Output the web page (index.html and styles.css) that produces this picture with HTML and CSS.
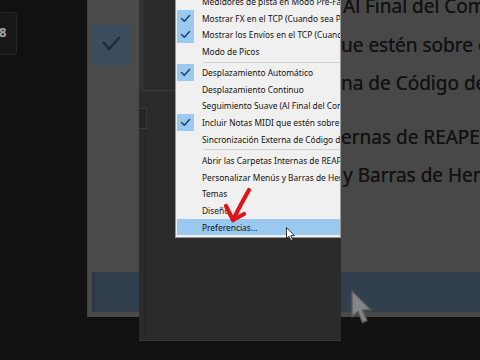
FILE: index.html
```html
<!DOCTYPE html>
<html lang="es">
<head>
<meta charset="utf-8">
<title>Menú Opciones</title>
<link rel="stylesheet" href="styles.css">
</head>
<body>
<div class="frame">
  <div class="col col-a">
    <div class="tl-box"><span class="tl-glyph">8</span></div>
  </div>
  <div class="col col-b">
    <div class="panel-b">
      <div class="chk-big">
        <svg width="38" height="40" viewBox="0 0 38 40"><polyline points="12,18 17,24 27,13" fill="none" stroke="#1c2a3a" stroke-width="2.4" stroke-linecap="round" stroke-linejoin="round"/></svg>
      </div>
      <div class="band band-b"></div>
    </div>
  </div>
  <div class="col col-c">
    <div class="panel-c">
      <div class="side-strip">
        <div class="strip-top"></div>
        <div class="strip-box"></div>
        <div class="strip-line"></div>
      </div>
      <div class="menu">
        <div class="menu-list">
          <div class="item"><span class="chk"></span><span class="label">Medidores de pista en Modo Pre-Fader</span></div>
          <div class="item"><span class="chk on"><svg width="17" height="17" viewBox="0 0 17 17"><polyline points="4.5,8.5 7.3,11.3 12.5,5.6" fill="none" stroke="#1f3d6b" stroke-width="1.5" stroke-linecap="round" stroke-linejoin="round"/></svg></span><span class="label">Mostrar FX en el TCP (Cuando sea Posible)</span></div>
          <div class="item"><span class="chk on"><svg width="17" height="17" viewBox="0 0 17 17"><polyline points="4.5,8.5 7.3,11.3 12.5,5.6" fill="none" stroke="#1f3d6b" stroke-width="1.5" stroke-linecap="round" stroke-linejoin="round"/></svg></span><span class="label">Mostrar los Envíos en el TCP (Cuando sea Posible)</span></div>
          <div class="item"><span class="chk"></span><span class="label">Modo de Picos</span></div>
          <div class="sep"></div>
          <div class="item"><span class="chk on"><svg width="17" height="17" viewBox="0 0 17 17"><polyline points="4.5,8.5 7.3,11.3 12.5,5.6" fill="none" stroke="#1f3d6b" stroke-width="1.5" stroke-linecap="round" stroke-linejoin="round"/></svg></span><span class="label">Desplazamiento Automático</span></div>
          <div class="item"><span class="chk"></span><span class="label">Desplazamiento Continuo</span></div>
          <div class="item"><span class="chk"></span><span class="label">Seguimiento Suave (Al Final del Compás)</span></div>
          <div class="item"><span class="chk on"><svg width="17" height="17" viewBox="0 0 17 17"><polyline points="4.5,8.5 7.3,11.3 12.5,5.6" fill="none" stroke="#1f3d6b" stroke-width="1.5" stroke-linecap="round" stroke-linejoin="round"/></svg></span><span class="label">Incluir Notas MIDI que estén sobre el Cursor</span></div>
          <div class="item"><span class="chk"></span><span class="label">Sincronización Externa de Código de Tiempo</span></div>
          <div class="sep"></div>
          <div class="item"><span class="chk"></span><span class="label">Abrir las Carpetas Internas de REAPER</span></div>
          <div class="item"><span class="chk"></span><span class="label">Personalizar Menús y Barras de Herramientas</span></div>
          <div class="item"><span class="chk"></span><span class="label">Temas</span></div>
          <div class="item"><span class="chk"></span><span class="label">Diseño</span></div>
          <div class="item hl"><span class="chk"></span><span class="label">Preferencias...</span></div>
        </div>
      </div>
    </div>
  </div>
  <div class="col col-d">
    <div class="panel-d">
      <div class="zoomtext">
        <div class="zl">Al Final del Compás</div>
        <div class="zl zl-flush">ue estén sobre el</div>
        <div class="zl zl-flush">na de Código de</div>
        <div class="zl zl-flush zl-gap">ernas de REAPER</div>
        <div class="zl">y Barras de Herr</div>
      </div>
      <div class="band band-d"></div>
    </div>
  </div>

  <svg class="red-arrow" width="40" height="44" viewBox="0 0 40 44">
    <path d="M30 4 Q23 16 14 34" fill="none" stroke="#e0141b" stroke-width="4.2" stroke-linecap="round"/>
    <path d="M7 20 L14 34 L25 28" fill="none" stroke="#e0141b" stroke-width="4.2" stroke-linecap="round" stroke-linejoin="round"/>
  </svg>
  <svg class="cursor-small" width="10" height="15" viewBox="0 0 10 15">
    <path d="M0.5 0.5 L0.5 11.5 L3 9.2 L4.8 13.6 L6.6 12.8 L4.8 8.6 L8.3 8.6 Z" fill="#ffffff" stroke="#202020" stroke-width="0.9" stroke-linejoin="round"/>
  </svg>
  <svg class="cursor-big" width="24" height="36" viewBox="0 0 24 36">
    <path d="M1 1 L1 27 L7 21.5 L11.5 32.5 L16 30.5 L11.5 20 L20 20 Z" fill="#858585" stroke="#5a5a5a" stroke-width="1.4" stroke-linejoin="round"/>
  </svg>
</div>
</body>
</html>
```

FILE: styles.css
```css
html, body {
  margin: 0;
  padding: 0;
  background: #111111;
}

.frame {
  position: relative;
  width: 480px;
  height: 360px;
  overflow: hidden;
  display: flex;
  background: #111111;
  font-family: "Noto Sans", "Open Sans", sans-serif;
}

.col {
  height: 360px;
  flex: none;
}

/* left black column */
.col-a {
  width: 87px;
  background: #111111;
}

.tl-box {
  margin-top: 12px;
  width: 17px;
  height: 43px;
  box-sizing: border-box;
  background: #181818;
  border: 1px solid #272727;
  border-left: none;
  border-radius: 0 4px 4px 0;
  overflow: hidden;
  display: flex;
  align-items: center;
}

.tl-glyph {
  margin-left: -1px;
  margin-top: -4px;
  font-size: 13px;
  font-weight: bold;
  color: #a8a8a8;
}

/* gray column */
.col-b {
  width: 52px;
}

.panel-b {
  height: 317px;
  background: #4a4a4a;
  border-left: 1px solid #414141;
  box-sizing: border-box;
  display: flex;
  flex-direction: column;
}

.chk-big {
  margin-top: 25px;
  margin-left: 4px;
  width: 38px;
  height: 40px;
  background: #3a4c5e;
}

.chk-big svg {
  display: block;
}

.band {
  height: 40px;
  background: #32404e;
}

.band-b {
  margin-top: auto;
  margin-bottom: 5px;
  margin-left: 4px;
  border-left: 3px solid #2d3844;
}

/* middle dark column with the menu */
.col-c {
  width: 202px;
}

.panel-c {
  height: 341px;
  background: #2b2b2b;
  border-bottom: 1px solid #3a3a3a;
  box-sizing: border-box;
  display: flex;
  align-items: flex-start;
}

.side-strip {
  width: 36px;
  height: 100%;
  flex: none;
  display: flex;
  flex-direction: column;
}

.strip-top {
  height: 90px;
  border-left: 5px solid #313131;
  border-bottom: 1px solid #3b3b3b;
}

.strip-box {
  margin-top: 17px;
  width: 7px;
  height: 19px;
  border: 1px solid #3a3a3a;
  border-left: none;
  background: #262626;
}

.strip-line {
  flex: 1;
  margin-left: 6px;
  width: 1px;
  background: #232323;
}

.menu {
  width: 166px;
  height: 238px;
  flex: none;
  box-sizing: border-box;
  background: #f0f0f0;
  border: 1px solid #9a9a9a;
  border-top: none;
  overflow: hidden;
}

.menu-list {
  margin-top: -6.95px;
}

.item {
  height: 16.7px;
  display: flex;
  align-items: center;
  margin-left: 1px;
  white-space: nowrap;
  font-size: 8.4px;
  color: #111111;
}

.item.hl {
  background: #99c9ef;
}

.chk {
  width: 17px;
  height: 100%;
  flex: none;
  display: flex;
  align-items: center;
  justify-content: center;
}

.chk.on {
  background: #9bcaf0;
}

.chk svg {
  display: block;
}

.label {
  margin-left: 8px;
  flex: 1;
  min-width: 0;
  overflow: hidden;
  text-overflow: clip;
}

.sep {
  height: 4.4px;
  display: flex;
  align-items: center;
  margin-left: 27px;
}

.sep::before {
  content: "";
  display: block;
  width: 100%;
  height: 1px;
  background: #d3d3d3;
}

/* right gray column with magnified text */
.col-d {
  width: 139px;
}

.panel-d {
  height: 317px;
  background: #484848;
  display: flex;
  flex-direction: column;
  overflow: hidden;
}

.zoomtext {
  margin-top: -13px;
}

.zl {
  height: 38.5px;
  line-height: 38.5px;
  font-size: 19px;
  color: #121212;
  text-shadow: 0 0 0.6px #121212;
  white-space: nowrap;
  overflow: hidden;
  padding-left: 2px;
}

.zl-flush {
  padding-left: 0;
}

.zl-gap {
  margin-top: 15px;
}

.band-d {
  margin-top: auto;
  margin-bottom: 5px;
}

/* overlays */
.red-arrow {
  position: absolute;
  left: 219px;
  top: 186px;
}

.cursor-small {
  position: absolute;
  left: 286px;
  top: 227px;
}

.cursor-big {
  position: absolute;
  left: 351px;
  top: 290px;
}
```
